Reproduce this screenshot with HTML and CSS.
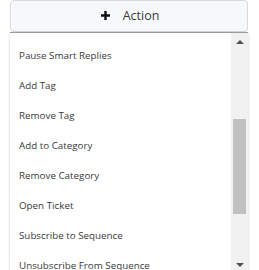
FILE: index.html
```html
<!DOCTYPE html>
<html lang="en">

<head>
    <meta charset="UTF-8">
    <meta name="viewport" content="width=device-width, initial-scale=1.0">
    <title>Action</title>
    <link rel="stylesheet" href="styles.css">
</head>

<body>
    <div class="wrap">
        <button class="action-btn" type="button">
            <svg class="plus" width="9" height="9" viewBox="0 0 9 9">
                <path d="M3.3 0h2.4v3.3H9v2.4H5.7V9H3.3V5.7H0V3.3h3.3z" fill="#111"/>
            </svg>
            <span>Action</span>
        </button>
        <div class="menu">
            <ul class="menu-list">
                <li>Pause Smart Replies</li>
                <li>Add Tag</li>
                <li>Remove Tag</li>
                <li>Add to Category</li>
                <li>Remove Category</li>
                <li>Open Ticket</li>
                <li>Subscribe to Sequence</li>
                <li>Unsubscribe From Sequence</li>
            </ul>
            <div class="scrollbar">
                <div class="arrow up"></div>
                <div class="track">
                    <div class="thumb"></div>
                </div>
                <div class="arrow down"></div>
            </div>
        </div>
    </div>
</body>

</html>
```

FILE: styles.css
```css
body {
    margin: 0;
    font-family: "Open Sans", Arial, sans-serif;
    background: #fff;
    height: 270px;
    overflow: hidden;
}

.wrap {
    width: 238px;
    margin-left: 10px;
}

.action-btn {
    width: 238px;
    height: 32px;
    display: flex;
    align-items: center;
    justify-content: center;
    gap: 13px;
    padding: 0 0 1px 2px;
    background: #f7f8fa;
    border: 1px solid #d9dadc;
    border-radius: 4px;
    font-family: "Open Sans", Arial, sans-serif;
    font-size: 12.5px;
    color: #3a3a3a;
    cursor: pointer;
}

.menu {
    height: 240px;
    display: flex;
    background: #fff;
    border-top: 1px solid #9a9a9a;
    box-shadow: 0 1px 3px rgba(0, 0, 0, 0.18);
    overflow: hidden;
}

.menu-list {
    flex: 1;
    list-style: none;
    margin: 0;
    padding: 8px 0 0;
}

.menu-list li {
    height: 30px;
    line-height: 30px;
    padding-left: 9px;
    font-size: 9.8px;
    color: #3a3a3a;
    white-space: nowrap;
}

.scrollbar {
    width: 17px;
    display: flex;
    flex-direction: column;
    background: #f1f1f1;
}

.arrow {
    height: 17px;
    display: flex;
    align-items: center;
    justify-content: center;
}

.arrow::after {
    content: "";
    border-left: 4px solid transparent;
    border-right: 4px solid transparent;
}

.arrow.up::after {
    border-bottom: 4px solid #505050;
}

.arrow.down::after {
    border-top: 4px solid #505050;
}

.track {
    flex: 1;
    padding: 69px 2px 0;
}

.thumb {
    height: 95px;
    background: #c1c1c1;
}
```
